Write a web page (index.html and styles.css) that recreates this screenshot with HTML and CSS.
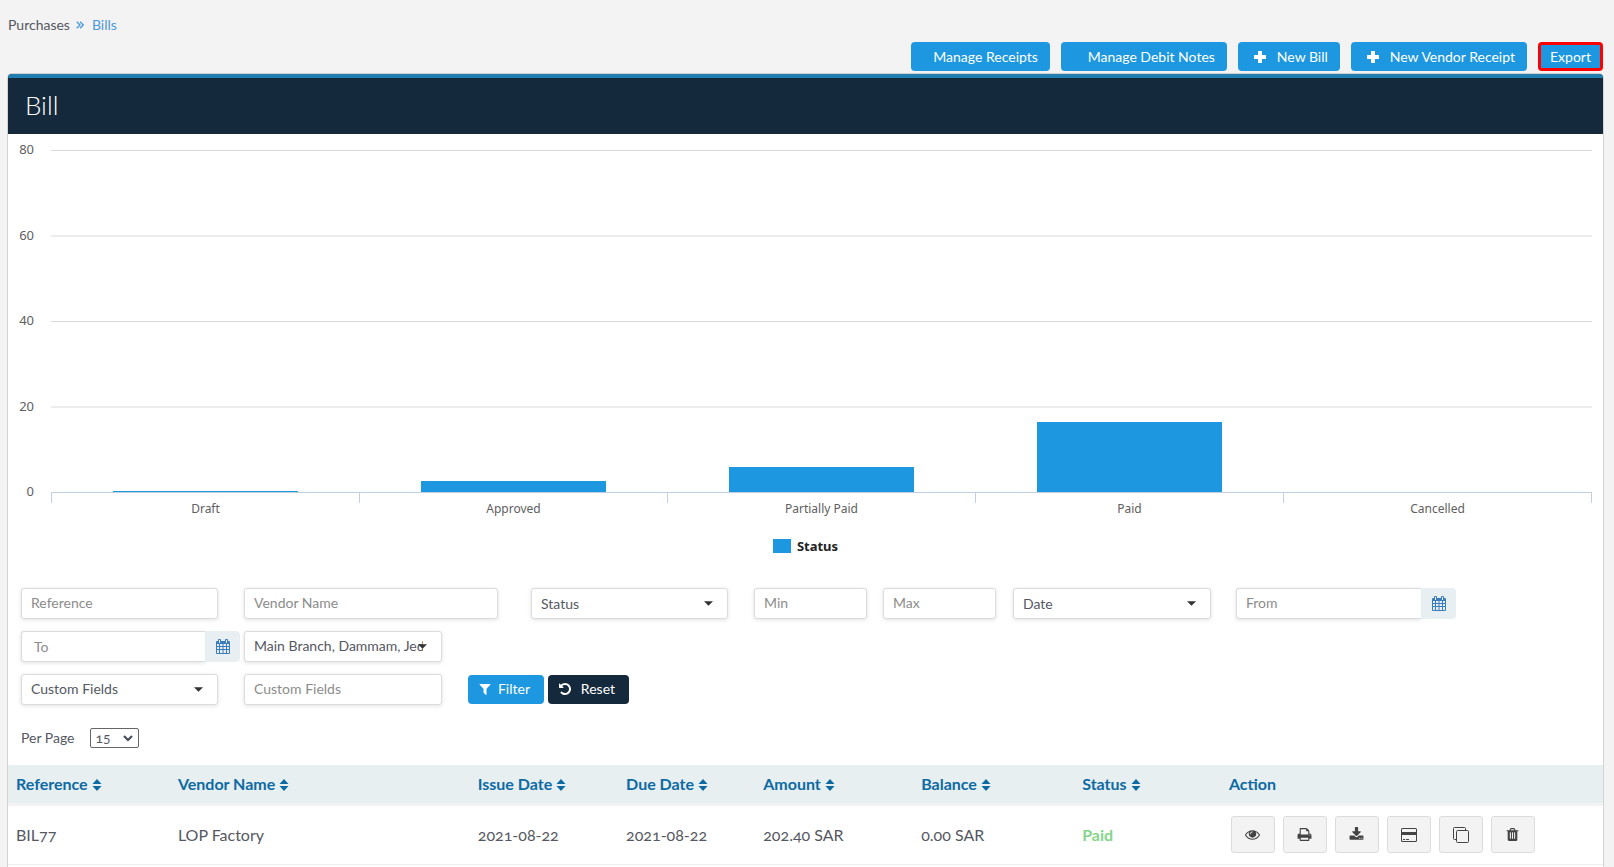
FILE: index.html
```html
<!DOCTYPE html>
<html lang="en">
<head>
<meta charset="utf-8">
<meta name="viewport" content="width=device-width, initial-scale=1">
<title>Bills</title>
<link rel="stylesheet" href="styles.css">
</head>
<body>
<svg class="sprite" aria-hidden="true">
  <symbol id="i-plus" viewBox="0 0 14 14"><path d="M5.500 1h3q.5 0 .5.500V5h3.500q.5 0 .5.500v3q0 .5-.5.500H9v3.500q0 .5-.5.500h-3q-.5 0-.5-.5V9H1.500Q1 9 1 8.500v-3Q1 5 1.500 5H5V1.500Q5 1 5.500 1z"/></symbol>
  <symbol id="i-filter" viewBox="0 0 1792 1792"><path d="M1595 295q17 41-14 70l-493 493v742q0 42-39 59-13 5-25 5-27 0-45-19l-256-256q-19-19-19-45v-486l-493-493q-31-29-14-70 17-39 59-39h1280q42 0 59 39z"/></symbol>
  <symbol id="i-undo" viewBox="0 0 1792 1792"><path d="M1664 896q0 156-61 298t-164 245-245 164-298 61q-172 0-327-72.500t-264-204.500q-7-10-6.500-22.500t8.500-20.500l137-138q10-9 25-9 16 2 23 12 73 95 179 147t225 52q104 0 198.500-40.500t163.500-109.500 109.500-163.500 40.500-198.500-40.500-198.500-109.500-163.500-163.500-109.500-198.500-40.500q-98 0-188 35.500t-160 101.500l137 138q31 30 14 69-17 40-59 40h-448q-26 0-45-19t-19-45v-448q0-42 40-59 39-17 69 14l130 129q107-101 244.500-156.500t284.500-55.500q156 0 298 61t245 164 164 245 61 298z"/></symbol>
  <symbol id="i-eye" viewBox="0 0 1792 1792"><path d="M1664 960q-152-236-381-353 61 104 61 225 0 185-131.500 316.500t-316.500 131.500-316.500-131.500-131.500-316.500q0-121 61-225-229 117-381 353 133 205 333.500 326.500t434.500 121.500 434.500-121.500 333.500-326.500zm-720-384q0-20-14-34t-34-14q-125 0-214.500 89.500t-89.500 214.500q0 20 14 34t34 14 34-14 14-34q0-86 61-147t147-61q20 0 34-14t14-34zm848 384q0 34-20 69-140 230-376.500 368.500t-499.500 138.500-499.500-139-376.500-368q-20-35-20-69t20-69q140-229 376.500-368t499.500-139 499.500 139 376.500 368q20 35 20 69z"/></symbol>
  <symbol id="i-print" viewBox="0 0 1792 1792"><path d="M448 1536h896v-256h-896v256zm0-640h896v-384h-160q-40 0-68-28t-28-68v-160h-640v640zm1152 64q0-26-19-45t-45-19-45 19-19 45 19 45 45 19 45-19 19-45zm128 0v416q0 13-9.500 22.500t-22.500 9.500h-224v160q0 40-28 68t-68 28h-960q-40 0-68-28t-28-68v-160h-224q-13 0-22.500-9.500t-9.500-22.500v-416q0-79 56.500-135.500t135.500-56.500h64v-544q0-40 28-68t68-28h672q40 0 88 20t76 48l152 152q28 28 48 76t20 88v256h64q79 0 135.500 56.500t56.500 135.500z"/></symbol>
  <symbol id="i-download" viewBox="0 0 1792 1792"><path d="M1344 1344q0-26-19-45t-45-19-45 19-19 45 19 45 45 19 45-19 19-45zm256 0q0-26-19-45t-45-19-45 19-19 45 19 45 45 19 45-19 19-45zm128-224v320q0 40-28 68t-68 28h-1472q-40 0-68-28t-28-68v-320q0-40 28-68t68-28h465l135 136q58 56 136 56t136-56l136-136h464q40 0 68 28t28 68zm-325-569q17 41-14 70l-448 448q-18 19-45 19t-45-19l-448-448q-31-29-14-70 17-39 59-39h256v-448q0-26 19-45t45-19h256q26 0 45 19t19 45v448h256q42 0 59 39z"/></symbol>
  <symbol id="i-trash" viewBox="0 0 1792 1792"><path d="M704 1376v-704q0-14-9-23t-23-9h-64q-14 0-23 9t-9 23v704q0 14 9 23t23 9h64q14 0 23-9t9-23zm256 0v-704q0-14-9-23t-23-9h-64q-14 0-23 9t-9 23v704q0 14 9 23t23 9h64q14 0 23-9t9-23zm256 0v-704q0-14-9-23t-23-9h-64q-14 0-23 9t-9 23v704q0 14 9 23t23 9h64q14 0 23-9t9-23zm-544-992h448l-48-117q-7-9-17-11h-317q-10 2-17 11zm928 32v64q0 14-9 23t-23 9h-96v948q0 83-47 143.500t-113 60.500h-832q-66 0-113-58.500t-47-141.500v-952h-96q-14 0-23-9t-9-23v-64q0-14 9-23t23-9h309l70-167q15-37 54-63t79-26h320q40 0 79 26t54 63l70 167h309q14 0 23 9t9 23z"/></symbol>
  <symbol id="i-card" viewBox="0 0 16 14"><path fill-rule="evenodd" d="M1.500 0h13A1.500 1.500 0 0 1 16 1.500v11a1.500 1.500 0 0 1-1.500 1.500h-13A1.500 1.500 0 0 1 0 12.500v-11A1.500 1.500 0 0 1 1.500 0zM1 1.500V4h14V1.500a.5.500 0 0 0-.5-.5h-13a.5.500 0 0 0-.5.500zM1 7v5.500c0 .300.200.500.500.500h13c.300 0 .500-.200.500-.500V7zM2 11h2v1H2zM5 11h3v1H5z"/></symbol>
  <symbol id="i-clone" viewBox="0 0 16 16"><path fill="none" stroke="currentColor" d="M12.500 3.500V1.500a1 1 0 0 0-1-1h-10a1 1 0 0 0-1 1v10a1 1 0 0 0 1 1h2M4.500 3.500h10a1 1 0 0 1 1 1v10a1 1 0 0 1-1 1h-10a1 1 0 0 1-1-1v-10a1 1 0 0 1 1-1z"/></symbol>
  <symbol id="i-calendar" viewBox="0 0 14 15"><path d="M3 0h1q1 0 1 1v1h4V1q0-1 1-1h1q1 0 1 1v1h1q1 0 1 1v11q0 1-1 1H1q-1 0-1-1V3q0-1 1-1h1V1q0-1 1-1z"/><path fill="#e7eff2" d="M3 1h1v3H3zM10 1h1v3h-1zM1 5h2v2H1zM4 5h2.500v2H4zM7.500 5H10v2H7.500zM11 5h2v2h-2zM1 8h2v2H1zM4 8h2.500v2H4zM7.500 8H10v2H7.500zM11 8h2v2h-2zM1 11h2v3H1zM4 11h2.500v3H4zM7.500 11H10v3H7.500zM11 11h2v3h-2z"/></symbol>
  <symbol id="i-sort" viewBox="0 0 10 14"><path d="M5 1l4.500 5h-9zM5 13L.5 8h9z"/></symbol>
  <symbol id="i-caret" viewBox="0 0 10 5"><path d="M0 0h10L5 5z"/></symbol>
  <symbol id="i-chevron" viewBox="0 0 10 7"><path fill="none" stroke="currentColor" stroke-width="2" d="M1 1l4 4 4-4"/></symbol>
  <symbol id="i-guillemet" viewBox="0 0 8 8"><path fill="none" stroke="currentColor" stroke-width="1.300" d="M.7.700L4 4 .7 7.300M4 .7L7.300 4 4 7.300"/></symbol>
</svg>

<nav class="breadcrumb" aria-label="Breadcrumb">
  <span>Purchases</span>
  <svg class="guillemet"><use href="#i-guillemet"/></svg>
  <a href="#">Bills</a>
</nav>

<div class="toolbar">
  <button class="btn btn-receipts" type="button">Manage Receipts</button>
  <button class="btn btn-debit" type="button">Manage Debit Notes</button>
  <button class="btn btn-add" type="button"><svg class="icon"><use href="#i-plus"/></svg>New Bill</button>
  <button class="btn btn-add" type="button"><svg class="icon"><use href="#i-plus"/></svg>New Vendor Receipt</button>
  <button class="btn btn-export" type="button">Export</button>
</div>

<main class="panel">
  <header class="panel-head"><h1>Bill</h1></header>

  <section class="chart" aria-label="Bills by status">
    <div class="plot-row">
      <div class="y-axis"><span>80</span><span>60</span><span>40</span><span>20</span><span>0</span></div>
      <div class="plot">
        <div class="band"><div class="bar" style="height:0.3%"></div></div>
        <div class="band"><div class="bar" style="height:3.3%"></div></div>
        <div class="band"><div class="bar" style="height:7.3%"></div></div>
        <div class="band"><div class="bar" style="height:20.5%"></div></div>
        <div class="band"></div>
      </div>
    </div>
    <div class="x-axis"><span>Draft</span><span>Approved</span><span>Partially Paid</span><span>Paid</span><span>Cancelled</span></div>
    <div class="legend"><i class="swatch"></i>Status</div>
  </section>

  <form class="filters">
    <div class="row row-main">
      <input class="field c1" type="text" placeholder="Reference" aria-label="Reference">
      <input class="field c2" type="text" placeholder="Vendor Name" aria-label="Vendor Name">
      <div class="picker c3"><select class="field" aria-label="Status"><option>Status</option></select><svg class="caret"><use href="#i-caret"/></svg></div>
      <input class="field c4" type="text" placeholder="Min" aria-label="Min">
      <input class="field c5" type="text" placeholder="Max" aria-label="Max">
      <div class="picker c6"><select class="field" aria-label="Date"><option>Date</option></select><svg class="caret"><use href="#i-caret"/></svg></div>
      <div class="date c7"><input class="field" type="text" placeholder="From" aria-label="From"><button class="date-btn" type="button" aria-label="Pick from date"><svg class="cal"><use href="#i-calendar"/></svg></button></div>
    </div>
    <div class="row row-sub">
      <div class="date date-to"><input class="field" type="text" placeholder="To" aria-label="To"><button class="date-btn" type="button" aria-label="Pick to date"><svg class="cal"><use href="#i-calendar"/></svg></button></div>
      <div class="picker picker-long c2"><select class="field" aria-label="Branch"><option>Main Branch, Dammam, Jeddah</option></select><svg class="caret"><use href="#i-caret"/></svg></div>
    </div>
    <div class="row row-sub">
      <div class="picker c1"><select class="field" aria-label="Custom Fields"><option>Custom Fields</option></select><svg class="caret"><use href="#i-caret"/></svg></div>
      <input class="field c2" type="text" placeholder="Custom Fields" aria-label="Custom field value">
      <div class="submit c3">
        <button class="btn btn-filter" type="button"><svg class="icon"><use href="#i-filter"/></svg>Filter</button>
        <button class="btn btn-filter btn-dark" type="reset"><svg class="icon"><use href="#i-undo"/></svg>Reset</button>
      </div>
    </div>
    <div class="per-page">
      <label for="per-page">Per Page</label>
      <div class="mini"><select id="per-page"><option>15</option></select><svg class="chevron"><use href="#i-chevron"/></svg></div>
    </div>
  </form>

  <table class="bills">
    <colgroup><col class="w-ref"><col class="w-vendor"><col class="w-issue"><col class="w-due"><col class="w-amount"><col class="w-balance"><col class="w-status"><col></colgroup>
    <thead>
      <tr>
        <th>Reference<svg class="sort"><use href="#i-sort"/></svg></th>
        <th>Vendor Name<svg class="sort"><use href="#i-sort"/></svg></th>
        <th>Issue Date<svg class="sort"><use href="#i-sort"/></svg></th>
        <th>Due Date<svg class="sort"><use href="#i-sort"/></svg></th>
        <th>Amount<svg class="sort"><use href="#i-sort"/></svg></th>
        <th>Balance<svg class="sort"><use href="#i-sort"/></svg></th>
        <th>Status<svg class="sort"><use href="#i-sort"/></svg></th>
        <th>Action</th>
      </tr>
    </thead>
    <tbody>
      <tr>
        <td>BIL77</td>
        <td>LOP Factory</td>
        <td>2021-08-22</td>
        <td>2021-08-22</td>
        <td>202.40 SAR</td>
        <td>0.00 SAR</td>
        <td class="paid">Paid</td>
        <td>
          <div class="actions">
            <button type="button" aria-label="View"><svg class="act"><use href="#i-eye"/></svg></button>
            <button type="button" aria-label="Print"><svg class="act"><use href="#i-print"/></svg></button>
            <button type="button" aria-label="Download"><svg class="act"><use href="#i-download"/></svg></button>
            <button type="button" aria-label="Payment"><svg class="act-card"><use href="#i-card"/></svg></button>
            <button type="button" aria-label="Duplicate"><svg class="act-clone"><use href="#i-clone"/></svg></button>
            <button type="button" aria-label="Delete"><svg class="act"><use href="#i-trash"/></svg></button>
          </div>
        </td>
      </tr>
    </tbody>
  </table>
</main>
</body>
</html>
```
FILE: styles.css
```css
* { box-sizing: border-box; }
html { overflow: hidden; }
body {
  margin: 0;
  padding: 16px 10px 0 7px;
  background: #f3f3f3;
  color: #555862;
  font: 14px/18px Lato, "Open Sans", sans-serif;
}
button, input, select { font: inherit; color: inherit; margin: 0; }
svg { fill: currentColor; flex: none; }
.sprite { position: absolute; width: 0; height: 0; }

.breadcrumb { display: flex; align-items: center; padding-left: 1px; }
.breadcrumb a { color: #4a98dc; text-decoration: none; }
.guillemet { width: 8px; height: 8px; margin: 0 8px 0 6px; color: #4a98dc; }

.toolbar { display: flex; justify-content: flex-end; gap: 11px; margin-top: 8px; padding-right: 1px; }
.btn {
  display: flex;
  align-items: center;
  justify-content: flex-end;
  height: 29px;
  padding: 0 12px;
  border: 0;
  border-radius: 4px;
  background: #1c97e0;
  color: #fff;
  white-space: nowrap;
}
.btn-receipts { width: 139px; }
.btn-debit { width: 166px; }
.btn-add { padding-left: 15px; }
.btn-add .icon { margin-right: 10px; }
.btn-export { justify-content: center; width: 65px; padding: 0; border: 3px solid #f00; }
.icon { width: 14px; height: 14px; }

.panel { margin-top: 2px; padding-bottom: 24px; border: 1px solid #d3d3d3; border-radius: 5px 5px 0 0; background: #fff; overflow: hidden; }
.panel-head { padding: 12px 17px 14px; border-top: 4px solid #207fb0; background: #15293d; }
.panel-head h1 { margin: 0; color: #fff; font-size: 26px; line-height: 30px; font-weight: 300; }

.chart { padding: 16px 11px 0; font-family: "Noto Sans", sans-serif; color: #606060; }
.plot-row { display: flex; }
.y-axis { display: flex; flex-direction: column; justify-content: space-between; width: 32px; margin: -10px 0 -7px; font-size: 13px; }
.y-axis span { width: 15px; text-align: right; }
.plot {
  display: flex;
  flex: 1;
  height: 343px;
  border-bottom: 1px solid #c0d0e0;
  background: linear-gradient(#d8d8d8 1px, transparent 1px) 0 0 / 100% 25%;
}
.band { flex: 1; display: flex; align-items: flex-end; justify-content: center; }
.bar { width: 60%; background: #1c97e0; }
.x-axis { display: flex; margin-left: 32px; border-right: 1px solid #c0d0e0; height: 10px; font-size: 12px; }
.x-axis span { flex: 1; border-left: 1px solid #c0d0e0; padding-top: 7px; text-align: center; }
.legend { display: flex; align-items: center; justify-content: center; gap: 6px; margin-top: 34px; color: #222; font-size: 13px; font-weight: 700; }
.swatch { width: 18px; height: 14px; background: #1c97e0; }

.filters { padding: 33px 0 17px 13px; }
.row { display: grid; align-items: center; margin-bottom: 11px; }
.row-main { grid-template-columns: 197fr 26fr 254fr 33fr 197fr 26fr 113fr 16fr 113fr 17fr 198fr 25fr 220fr 147fr; }
.row-sub { grid-template-columns: 197fr 26fr 198fr 26fr 1135fr; min-height: 32px; }
.c1 { grid-column: 1; }
.c2 { grid-column: 3; }
.c3 { grid-column: 5; }
.c4 { grid-column: 7; }
.c5 { grid-column: 9; }
.c6 { grid-column: 11; }
.c7 { grid-column: 13; }
.field {
  width: 100%;
  min-width: 0;
  height: 31px;
  padding: 0 9px 2px;
  border: 1px solid #dcdcdc;
  border-radius: 3px;
  background: #fff;
  box-shadow: 0 1px 4px rgba(0, 0, 0, .12);
  appearance: none;
}
.field::placeholder { color: #8c8c8c; opacity: 1; }
.picker { position: relative; }
.picker .field { display: block; padding: 0 18px 0 9px; }
.picker .caret { position: absolute; right: 15px; top: 13px; width: 9px; height: 5px; color: #333; pointer-events: none; }
.date { display: flex; }
.date .field { border-right: 0; border-radius: 3px 0 0 3px; flex: 1; }
.date-to { grid-column: 1 / 3; padding-right: 4px; }
.date-to .field { padding: 0 12px; }
.date-btn { display: grid; place-items: center; width: 35px; padding: 0; border: 0; border-radius: 0 4px 4px 0; background: #e7eff2; color: #3d7cbc; }
.cal { width: 14px; height: 15px; }
.submit { display: flex; gap: 4px; }
.btn-filter { width: 76px; padding: 0 14px 0 10px; justify-content: space-between; }
.btn-dark { width: 81px; background: #15293d; }
.per-page { display: flex; align-items: center; gap: 15px; margin-top: 23px; }
.mini { position: relative; }
.mini select { display: block; width: 49px; height: 20px; padding: 0 5px; border: 1px solid #666; border-radius: 2px; background: #fff; font-variant-numeric: oldstyle-nums; appearance: none; }
.chevron { position: absolute; right: 6px; top: 7px; width: 10px; height: 7px; color: #444858; pointer-events: none; }

.bills { width: 100%; border-collapse: collapse; table-layout: fixed; font-size: 16px; }
.bills th { height: 39px; padding: 0 8px; background: #e7eff1; color: #0d6aa3; font-weight: 700; text-align: left; white-space: nowrap; }
.bills thead { border-bottom: 3px solid #f3f3f3; }
.bills td { height: 60px; padding: 0 8px; border-bottom: 1px solid #eee; font-weight: 400; font-variant-numeric: oldstyle-nums; }
.bills td.paid { color: #84d68a; font-weight: 700; }
.w-ref { width: 10.15%; }
.w-vendor { width: 18.8%; }
.w-issue { width: 9.3%; }
.w-due { width: 8.6%; }
.w-amount { width: 9.9%; }
.w-balance { width: 10.1%; }
.w-status { width: 9.2%; }
.sort { width: 10px; height: 14px; margin-left: 4px; vertical-align: -2px; }
.actions { display: flex; gap: 8px; padding-left: 2px; }
.actions button { display: grid; place-items: center; width: 44px; height: 37px; padding: 0; border: 1px solid #dcdcdc; border-radius: 3px; background: #f3f3f3; color: #444; }
.act { width: 15px; height: 15px; }
.act-card { width: 16px; height: 14px; }
.act-clone { width: 16px; height: 16px; }
```
